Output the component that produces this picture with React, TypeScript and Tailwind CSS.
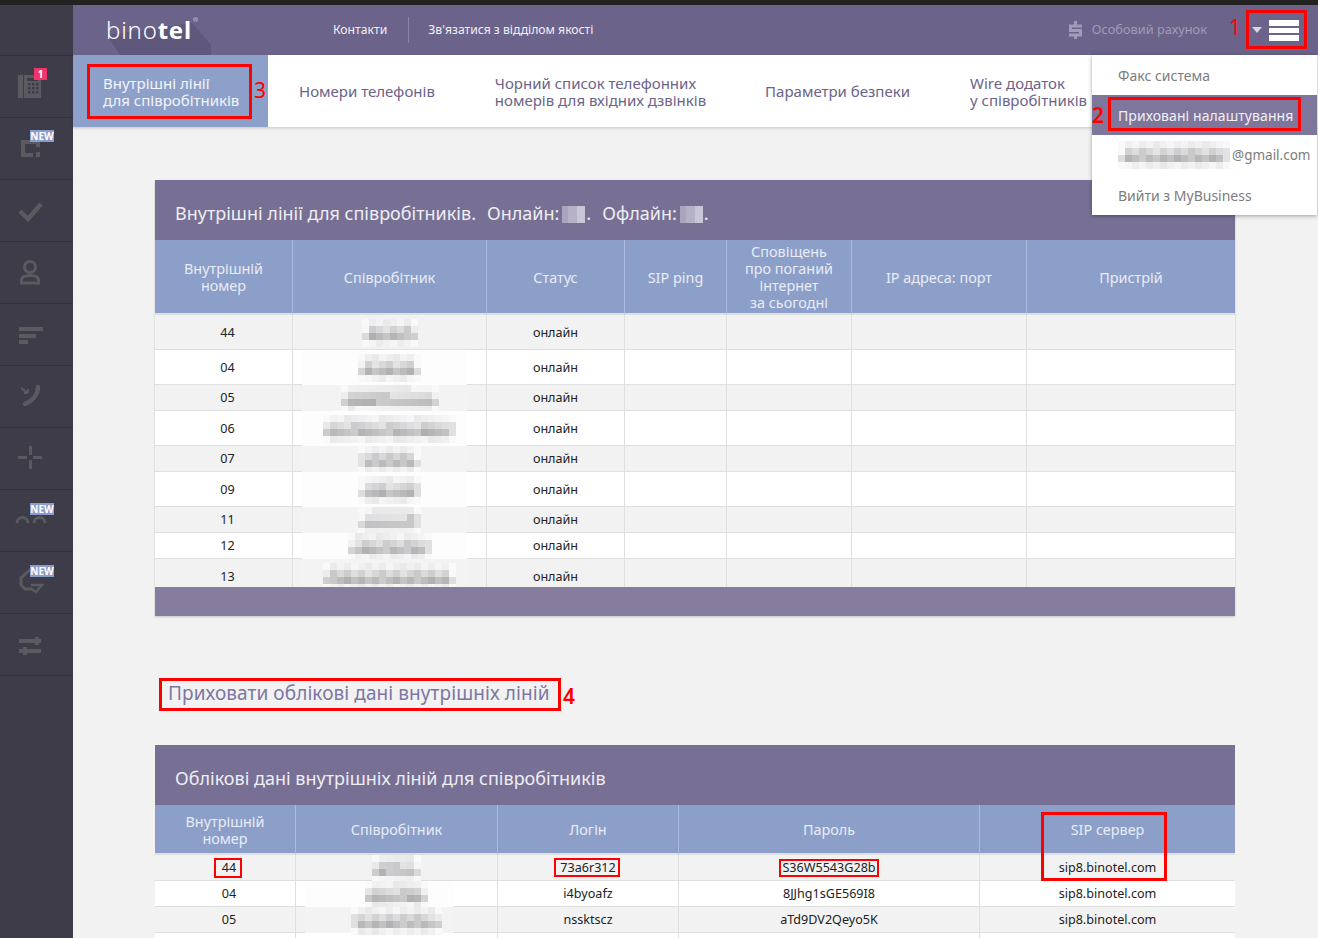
import React from "react";

const ICON = "#5b5a60";

function Pixels({ cols, seed }: { cols: number; seed: number }) {
  return (
    <span className="-my-[6px] inline-flex flex-col align-middle">
      {[0, 1, 2, 3].map((r) => (
        <span key={r} className="flex">
          {Array.from({ length: cols }).map((_, c) => {
            const noise = ((c + 3) * (seed + 5) * 37 + (r + 1) * 53) % 29;
            const edge = c === 0 || c === cols - 1 ? 24 : 0;
            const base = r === 2 ? 176 : r === 1 ? 200 : 232;
            const v = Math.min(249, base + Math.round(noise * (r === 0 || r === 3 ? 0.5 : 1)) + edge);
            return (
              <span
                key={c}
                className="h-[7px] w-[7px]"
                style={{ backgroundColor: `rgb(${v},${v},${Math.min(252, v + (c % 3))})` }}
              />
            );
          })}
        </span>
      ))}
    </span>
  );
}

function TitlePixels() {
  return (
    <span className="ml-[3px] mr-px inline-flex h-[17px] w-[23px] align-[-3px]">
      <span className="w-[6px] bg-[#aaa5bd]" />
      <span className="w-[9px] bg-[#b5b1c6]" />
      <span className="w-[8px] bg-[#c9c6d6]" />
    </span>
  );
}

function NewBadge({ top }: { top: number }) {
  return (
    <span
      className="absolute left-[30px] h-[12px] w-[24px] bg-[#8a9cc9] text-center text-[10px] font-bold leading-[12px] text-white font-['Liberation_Sans',sans-serif]"
      style={{ top }}
    >
      NEW
    </span>
  );
}

function NavIcon({ children, badge }: { children: React.ReactNode; badge?: React.ReactNode }) {
  return (
    <div className="relative h-[62px] border-b border-[#33313b]">
      <svg className="h-[61px] w-[73px]" viewBox="0 0 73 61" fill="none">
        {children}
      </svg>
      {badge}
    </div>
  );
}

function Sidebar() {
  return (
    <aside className="w-[73px] shrink-0 bg-[#3e3c48]">
      <div className="h-[51px] border-b border-[#33313b]" />
      <NavIcon
        badge={
          <span className="absolute left-[34px] top-[12px] h-[12px] w-[13px] bg-[#f0356b] text-center text-[10px] font-bold leading-[12px] text-white font-['Liberation_Sans',sans-serif]">
            1
          </span>
        }
      >
        <rect x="18" y="19" width="5" height="23" fill={ICON} />
        <rect x="24" y="19" width="17" height="23" fill={ICON} />
        <rect x="27" y="22" width="11" height="3" fill="#3e3c48" />
        {[28, 32, 36].map((x) =>
          [27, 31, 35].map((y) => <rect key={`${x}-${y}`} x={x} y={y} width="2.5" height="2.5" fill="#3e3c48" />)
        )}
      </NavIcon>
      <NavIcon badge={<NewBadge top={12} />}>
        <path d="M33 37H23V24H38V29" stroke={ICON} strokeWidth="4" />
        <rect x="36" y="34" width="4" height="5" fill={ICON} />
      </NavIcon>
      <NavIcon>
        <path d="M20 31L28 39L41 24" stroke={ICON} strokeWidth="4.5" />
      </NavIcon>
      <NavIcon>
        <circle cx="30" cy="25" r="5.5" stroke={ICON} strokeWidth="3" />
        <path d="M21.5 41V38C21.5 35 25 33.5 30 33.5S38.5 35 38.5 38V41Z" stroke={ICON} strokeWidth="3" />
      </NavIcon>
      <NavIcon>
        <rect x="19" y="23" width="24" height="4" fill={ICON} />
        <rect x="19" y="30" width="17" height="4" fill={ICON} />
        <rect x="19" y="36" width="9" height="4" fill={ICON} />
      </NavIcon>
      <NavIcon>
        <path d="M38 21C38 29 32 35 25 38" stroke={ICON} strokeWidth="4.5" strokeLinecap="round" />
        <path d="M21 22L28 27M28 27V23M28 27H24" stroke={ICON} strokeWidth="2" />
      </NavIcon>
      <NavIcon>
        <rect x="29" y="18" width="3" height="9" fill={ICON} />
        <rect x="29" y="32" width="3" height="9" fill={ICON} />
        <rect x="18" y="28" width="9" height="3" fill={ICON} />
        <rect x="33" y="28" width="9" height="3" fill={ICON} />
      </NavIcon>
      <NavIcon badge={<NewBadge top={13} />}>
        <path d="M17 33A5.5 5.5 0 0 1 28 33M34 33A5.5 5.5 0 0 1 45 33" stroke={ICON} strokeWidth="3" />
      </NavIcon>
      <NavIcon badge={<NewBadge top={13} />}>
        <path d="M31 17L21 26V33L25 37H32" stroke={ICON} strokeWidth="3" />
        <path d="M31 33H42L36 40L30 36" stroke={ICON} strokeWidth="2.5" />
      </NavIcon>
      <NavIcon>
        <rect x="19" y="25" width="22" height="4" fill={ICON} />
        <rect x="35" y="23" width="4" height="8" fill={ICON} />
        <rect x="19" y="35" width="22" height="4" fill={ICON} />
        <rect x="23" y="33" width="4" height="8" fill={ICON} />
      </NavIcon>
    </aside>
  );
}

function Header() {
  return (
    <header className="relative flex h-[50px] items-center bg-[#6b6389] text-white">
      <svg className="absolute left-0 top-0 h-[50px] w-[150px]" viewBox="0 0 150 50">
        <path d="M34 30L47 50H138V40L119 18Z" fill="#5f587c" />
      </svg>
      <div className="relative ml-[33px] w-[227px] text-[24px] font-light leading-[30px] tracking-[0.8px]">
        bino<span className="font-bold">tel</span>
        <sup className="ml-[1px] align-[14px] text-[6px]">®</sup>
      </div>
      <a className="text-[12.2px] text-[#f0eff5]">Контакти</a>
      <span className="ml-[21px] mr-[19px] h-[26px] w-px bg-[#8a83a5]" />
      <a className="text-[12.2px] text-[#f0eff5]">Зв'язатися з відділом якості</a>
      <div className="ml-auto flex items-center">
        <svg className="h-[18px] w-[15px]" viewBox="0 0 15 18" fill="none">
          <path d="M14 5H2.5V9.5H12.5V14H1M7.5 0V3.5M7.5 14.5V18" stroke="#a09bb7" strokeWidth="3" />
        </svg>
        <span className="ml-[9px] text-[12.8px] text-[#a09bb7]">Особовий рахунок</span>
        <span className="ml-[45px] h-0 w-0 border-x-[5px] border-t-[6px] border-x-transparent border-t-[#d8d6e2]" />
        <div className="ml-[7px] mr-[19px] flex w-[30px] flex-col gap-[2px]">
          <span className="h-[6px] bg-white" />
          <span className="h-[5px] bg-white" />
          <span className="h-[6px] bg-white" />
        </div>
      </div>
    </header>
  );
}

function Tabs() {
  const tabs = [
    { lines: ["Номери телефонів"], cls: "ml-[1px]" },
    { lines: ["Чорний список телефонних", "номерів для вхідних дзвінків"], cls: "" },
    { lines: ["Параметри безпеки"], cls: "-ml-[1px]" },
    { lines: ["Wire додаток", "у співробітників"], cls: "" },
  ];
  return (
    <nav className="flex h-[72px] bg-white pt-[1px] text-[15px] leading-[17px] text-[#6b6389] shadow-[0_1px_3px_rgba(0,0,0,0.2)]">
      <div className="-mt-[1px] flex w-[195px] flex-col justify-center bg-[#8da0c9] pl-[30px] pt-[1px] text-[#f3f5fa]">
        <span>Внутрішні лінії</span>
        <span>для співробітників</span>
      </div>
      {tabs.map((t) => (
        <div key={t.lines[0]} className={`flex flex-col justify-center whitespace-nowrap px-[30px] ${t.cls}`}>
          {t.lines.map((line) => (
            <span key={line}>{line}</span>
          ))}
        </div>
      ))}
    </nav>
  );
}

function Th({ children }: { children: React.ReactNode }) {
  return (
    <th className="border-r border-[#aab9dc] border-b-2 border-b-[#dfdfdf] bg-[#8c9fc9] px-1 pt-[1px] text-center text-[14.4px] font-normal leading-[17px] text-[#e8ecf5] last:border-r-0">
      {children}
    </th>
  );
}

function Td({ children, halo }: { children?: React.ReactNode; halo?: string }) {
  return (
    <td className="relative border-r border-b border-[#dfdfdf] p-0 pt-[1px] text-center text-[12.6px] leading-[18px] text-[#222] last:border-r-0">
      {halo && <span className={`absolute -bottom-[1px] top-0 ${halo}`} />}
      <span className="relative">{children}</span>
    </td>
  );
}

const lines: [string, number, number][] = [
  ["44", 35, 8],
  ["04", 35, 9],
  ["05", 26, 14],
  ["06", 35, 19],
  ["07", 26, 9],
  ["09", 35, 9],
  ["11", 26, 9],
  ["12", 26, 12],
  ["13", 35, 19],
];

const creds: [string, number, string, string][] = [
  ["44", 7, "73a6r312", "S36W5543G28b"],
  ["04", 9, "i4byoafz", "8JJhg1sGE569I8"],
  ["05", 13, "nssktscz", "aTd9DV2Qeyo5K"],
  ["06", 10, "", ""],
];

function PanelTitle({ children }: { children: React.ReactNode }) {
  return (
    <h2 className="h-[60px] bg-[#777094] pl-[20px] pt-[20px] text-[18px] font-normal leading-[27px] text-[#eeeef4]">
      {children}
    </h2>
  );
}

function LinesPanel() {
  return (
    <section className="shadow-[0_1px_2px_rgba(0,0,0,0.2)]">
      <PanelTitle>
        Внутрішні лінії для співробітників.<span className="ml-[11px]">Онлайн:</span>
        <TitlePixels />.<span className="ml-[11px]">Офлайн:</span>
        <TitlePixels />.
      </PanelTitle>
      <div className="h-[347px] overflow-hidden">
        <table className="w-full table-fixed border-separate border-spacing-0">
          <colgroup>
            <col className="w-[138px]" />
            <col className="w-[194px]" />
            <col className="w-[138px]" />
            <col className="w-[102px]" />
            <col className="w-[125px]" />
            <col className="w-[175px]" />
            <col className="w-[208px]" />
          </colgroup>
          <thead>
            <tr className="h-[75px]">
              <Th>
                Внутрішній
                <br />
                номер
              </Th>
              <Th>Співробітник</Th>
              <Th>Статус</Th>
              <Th>SIP ping</Th>
              <Th>
                Сповіщень
                <br />
                про поганий
                <br />
                інтернет
                <br />
                за сьогодні
              </Th>
              <Th>IP адреса: порт</Th>
              <Th>Пристрій</Th>
            </tr>
          </thead>
          <tbody>
            {lines.map(([num, height, cols], i) => (
              <tr key={num} className={i % 2 === 0 ? "bg-[#f2f2f2]" : "bg-white"} style={{ height }}>
                <Td>
                  <span className="ml-[8px]">{num}</span>
                </Td>
                <Td
                  halo={
                    i === 0
                      ? undefined
                      : i % 2 === 0
                        ? "left-[9px] right-[19px] bg-[#f3f3f3]"
                        : "left-[9px] right-[19px] bg-[#fdfdfd]"
                  }
                >
                  <Pixels cols={cols} seed={i} />
                </Td>
                <Td>онлайн</Td>
                <Td />
                <Td />
                <Td />
                <Td />
              </tr>
            ))}
          </tbody>
        </table>
      </div>
      <div className="h-[29px] bg-[#857c9e]" />
    </section>
  );
}

function CredsPanel() {
  return (
    <section>
      <PanelTitle>Облікові дані внутрішніх ліній для співробітників</PanelTitle>
      <table className="w-full table-fixed border-separate border-spacing-0">
        <colgroup>
          <col className="w-[141px]" />
          <col className="w-[202px]" />
          <col className="w-[181px]" />
          <col className="w-[301px]" />
          <col className="w-[255px]" />
        </colgroup>
        <thead>
          <tr className="h-[50px]">
            <Th>
              Внутрішній
              <br />
              номер
            </Th>
            <Th>Співробітник</Th>
            <Th>Логін</Th>
            <Th>Пароль</Th>
            <Th>SIP сервер</Th>
          </tr>
        </thead>
        <tbody>
          {creds.map(([num, cols, login, pass], i) => (
            <tr key={num} className={i % 2 === 0 ? "h-[26px] bg-[#f2f2f2]" : "h-[26px] bg-white"}>
              <Td>{i < 3 ? <span className="ml-[8px]">{num}</span> : null}</Td>
              <Td
                halo={
                  i === 1
                    ? "left-[9px] right-[44px] bg-[#fdfdfd]"
                    : i === 2
                      ? "left-[9px] right-[44px] bg-[#f3f3f3]"
                      : undefined
                }
              >
                {i < 3 ? <Pixels cols={cols} seed={i + 20} /> : null}
              </Td>
              <Td>{login}</Td>
              <Td>{pass}</Td>
              <Td>{i < 3 ? "sip8.binotel.com" : ""}</Td>
            </tr>
          ))}
        </tbody>
      </table>
    </section>
  );
}

function AccountMenu() {
  return (
    <div className="absolute right-[1px] top-[55px] z-10 w-[225px] bg-white text-[14px] text-[#7d7d7d] shadow-[0_1px_4px_rgba(0,0,0,0.35)]">
      <div className="flex h-[40px] items-center pl-[26px]">Факс система</div>
      <div className="flex h-[40px] items-center bg-[#7f769c] pl-[26px] tracking-[0.08px] text-[#f1f0f5]">
        Приховані налаштування
      </div>
      <div className="flex h-[40px] items-center whitespace-nowrap pl-[26px]">
        <Pixels cols={16} seed={40} />
        <span className="ml-[2px] text-[13.5px]">@gmail.com</span>
      </div>
      <div className="flex h-[40px] items-center pl-[26px]">Вийти з MyBusiness</div>
    </div>
  );
}

// red marks drawn over the screenshot
function Mark({ className }: { className: string }) {
  return <div className={`absolute z-20 border-[#ff0000] ${className}`} />;
}

function Num({ className, children }: { className: string; children: React.ReactNode }) {
  return <span className={`absolute z-20 text-[21px] leading-[24px] text-[#ff0000] ${className}`}>{children}</span>;
}

export default function App() {
  return (
    <div className="relative h-[938px] overflow-hidden bg-[#f2f2f2] font-['Open_Sans',sans-serif]">
      <div className="h-[5px] bg-[#222222]" />
      <div className="flex">
        <Sidebar />
        <main className="min-w-0 flex-1">
          <Header />
          <Tabs />
          <div className="pl-[82px] pr-[83px] pt-[53px]">
            <LinesPanel />
            <div className="flex h-[129px] items-center pl-[13px] pt-[26px] text-[19px] tracking-[0.08px] text-[#7d76a3]">
              Приховати облікові дані внутрішніх ліній
            </div>
            <CredsPanel />
          </div>
        </main>
      </div>
      <AccountMenu />

      <Mark className="left-[1246px] top-[10px] h-[39px] w-[61px] border-[3px]" />
      <Num className="left-[1229px] top-[15px]">1</Num>
      <Mark className="left-[1108px] top-[97px] h-[34px] w-[193px] border-[3px]" />
      <Num className="left-[1092px] top-[103px] font-semibold">2</Num>
      <Mark className="left-[87px] top-[64px] h-[55px] w-[165px] border-[3px]" />
      <Num className="left-[254px] top-[78px]">3</Num>
      <Mark className="left-[159px] top-[678px] h-[33px] w-[402px] border-[3px]" />
      <Num className="left-[563px] top-[684px] font-semibold">4</Num>
      <Mark className="left-[214px] top-[858px] h-[20px] w-[28px] border-2" />
      <Mark className="left-[554px] top-[858px] h-[19px] w-[66px] border-2" />
      <Mark className="left-[779px] top-[859px] h-[18px] w-[100px] border-2" />
      <Mark className="left-[1041px] top-[812px] h-[69px] w-[126px] border-[3px]" />
    </div>
  );
}
